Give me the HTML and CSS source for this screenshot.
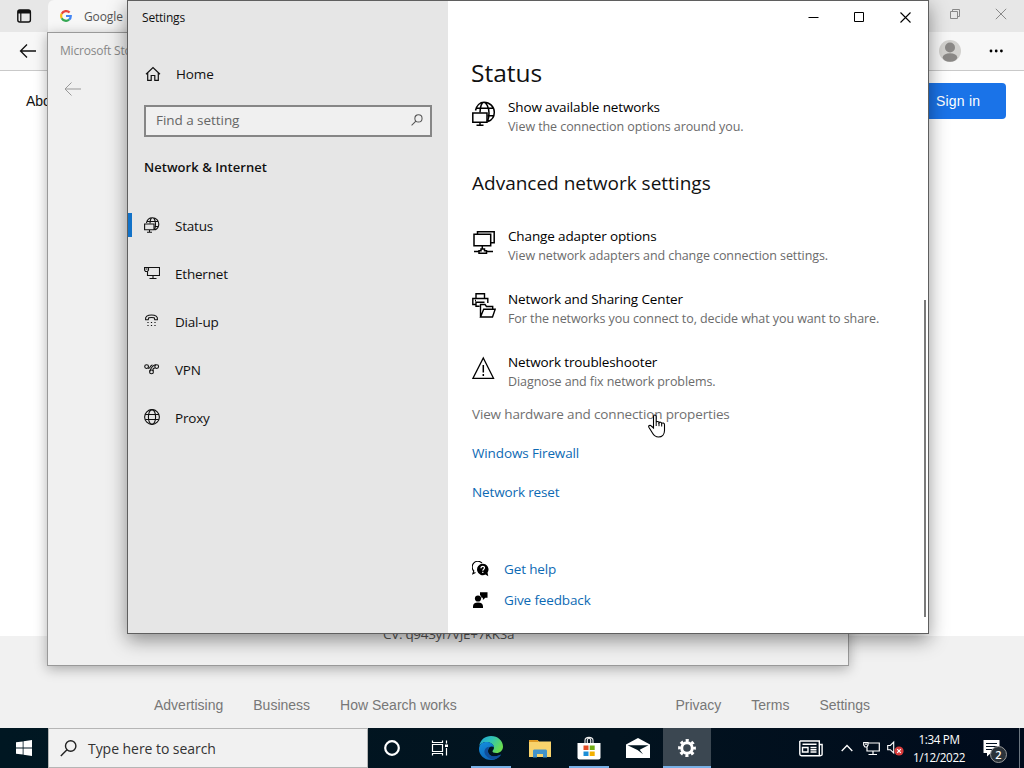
FILE: index.html
```html
<!DOCTYPE html>
<html lang="en">
<head>
    <meta charset="UTF-8">
    <meta name="viewport" content="width=device-width, initial-scale=1.0">
    <title>Settings</title>
    <link rel="stylesheet" href="styles.css">
</head>
<body>
    <div class="desktop">
        <!-- Edge -->
        <div class="browser">
            <div class="tab-strip">
                <svg class="tab-menu" width="16" height="16" viewBox="0 0 16 16"><rect x="1.8" y="2" width="12.6" height="12" rx="2" fill="none" stroke="#111" stroke-width="1.4"/><path d="M2 2h12v3.5H2z" fill="#111"/><path d="M4.8 5v8.5" stroke="#111" stroke-width="1.2"/></svg>
                <div class="tab">
                    <svg width="12" height="12" viewBox="0 0 12 12" fill="none" stroke-width="2.2"><path d="M9.6 2.6A4.9 4.9 0 0 0 1.7 3.8" stroke="#e8453c"/><path d="M1.7 3.8a4.9 4.9 0 0 0 0 4.4" stroke="#f8bb15"/><path d="M1.7 8.2a4.9 4.9 0 0 0 7.4 1.5" stroke="#34a853"/><path d="M9.1 9.7A4.8 4.8 0 0 0 10.8 6H6" stroke="#4285f4"/></svg>
                    <span>Google</span>
                </div>
                <div class="browser-caption">
                    <svg width="12" height="12" viewBox="0 0 12 12" fill="none" stroke="#888"><path d="M1.5 3.5h7v7h-7zM3.5 3.5v-2h7v7h-2"/></svg>
                    <svg width="12" height="12" viewBox="0 0 12 12" fill="none" stroke="#888"><path d="M.8.8l10.4 10.4M11.2.8L.8 11.2"/></svg>
                </div>
            </div>
            <div class="toolbar">
                <svg class="back" width="18" height="16" viewBox="0 0 18 16" fill="none" stroke="#111" stroke-width="1.3"><path d="M17 8H1.5M8 1.5L1.5 8 8 14.5"/></svg>
                <svg class="avatar" width="22" height="22" viewBox="0 0 22 22"><circle cx="11" cy="11" r="11" fill="#d2d1ce"/><circle cx="11" cy="7.5" r="5" fill="#8a8886"/><ellipse cx="11" cy="17.5" rx="7.3" ry="4.2" fill="#8a8886"/></svg>
                <svg class="more" width="14" height="4" viewBox="0 0 14 4"><circle cx="2" cy="2" r="1.4"/><circle cx="7.2" cy="2" r="1.4"/><circle cx="12.4" cy="2" r="1.4"/></svg>
            </div>
            <div class="page">
                <div class="page-header">
                    <span>About</span>
                    <span class="sign-in">Sign in</span>
                </div>
                <div class="page-footer">
                    <span>Advertising</span>
                    <span>Business</span>
                    <span>How Search works</span>
                    <span class="footer-right">Privacy</span>
                    <span>Terms</span>
                    <span>Settings</span>
                </div>
            </div>
        </div>

        <!-- Microsoft Store -->
        <div class="store">
            <div class="store-title">Microsoft Store</div>
            <svg class="store-back" width="17" height="14" viewBox="0 0 17 14" fill="none" stroke="#999"><path d="M17 7H1M7.5.5L1 7l6.500 6.500"/></svg>
            <div class="store-cv">CV: q943yr/VJE+7kKSa</div>
        </div>

        <!-- Settings -->
        <div class="settings">
            <div class="sidebar">
                <div class="window-title">Settings</div>
                <div class="home">
                    <svg width="16" height="16" viewBox="0 0 16 16" fill="none" stroke="#111" stroke-width="1.2"><path d="M1 8.200L8 1.500l7 6.700M2.700 6.800v7.600h3.500V9.500h3.600v4.900h3.500V6.800"/></svg>
                    <span>Home</span>
                </div>
                <div class="search-box">
                    <span>Find a setting</span>
                    <svg width="12" height="12" viewBox="0 0 14 14" fill="none" stroke="#555" stroke-width="1.200"><circle cx="8.700" cy="5.200" r="4.200"/><path d="M5.700 8.200L.7 13.200"/></svg>
                </div>
                <div class="section">Network &amp; Internet</div>
                <div class="nav">
                    <div class="nav-item active">
                        <svg width="16" height="16" viewBox="0 0 16 16" fill="none" stroke="#111" stroke-width="1.100"><path d="M2.500 6C3 2.800 5.500.8 8.500.8c3.600 0 6.300 2.800 6.300 6.300 0 2.800-1.600 5-4 5.900M6 6.500C6 3 7 .8 8.500.8s3 2.700 3 6.200-.7 5-1.200 5.800M3 4.500h11.500M10.500 9.500h4"/><path d="M.6 7h9.400v5.700H.6zM5.500 12.700v2.500M3 15.200h5"/></svg>
                        <span>Status</span>
                    </div>
                    <div class="nav-item">
                        <svg width="16" height="16" viewBox="0 0 16 16" fill="none" stroke="#111" stroke-width="1.100"><path d="M5 2.500h10.500v8H3.500V7M9 10.500v3M5.500 13.500h7M.5 2.500H4.500V5L3.500 6.500h-2L.5 5zM1.500 4h2"/></svg>
                        <span>Ethernet</span>
                    </div>
                    <div class="nav-item">
                        <svg width="16" height="16" viewBox="0 0 16 16" fill="none" stroke="#111" stroke-width="1.100"><path d="M1.600 6.700C1 3.500 3.500 2 7.500 2s6.500 1.500 5.900 4.700h-2.600l-.6-1.900C8.500 4.400 6.500 4.400 4.800 4.800L4.200 6.700z"/><path d="M3.400 9.500h8.500M3.400 12.500h8.500" stroke-dasharray="1.200 2.300" stroke-width="1.200"/></svg>
                        <span>Dial-up</span>
                    </div>
                    <div class="nav-item">
                        <svg width="16" height="16" viewBox="0 0 16 16" fill="none" stroke="#111" stroke-width="1.100"><circle cx="2.600" cy="5.600" r="1.900"/><circle cx="12.700" cy="5.600" r="1.900"/><circle cx="7.500" cy="10.900" r="1.900"/><path d="M4 7C6 8.500 6 3.800 8.500 4M5.600 10.500C6.500 8 8.500 4 12 3.700M9.200 10C8.500 8 9.500 6.800 11.200 7"/></svg>
                        <span>VPN</span>
                    </div>
                    <div class="nav-item">
                        <svg width="16" height="16" viewBox="0 0 16 16" fill="none" stroke="#111" stroke-width="1.100"><circle cx="8" cy="8" r="7.400"/><ellipse cx="8" cy="8" rx="3.600" ry="7.400"/><path d="M1.200 5.500h13.600M1.200 10.500h13.600"/></svg>
                        <span>Proxy</span>
                    </div>
                </div>
            </div>

            <div class="main">
                <div class="caption">
                    <svg width="11" height="11" viewBox="0 0 11 11" fill="none" stroke="#000"><path d="M.5 5.500h10"/></svg>
                    <svg width="11" height="11" viewBox="0 0 11 11" fill="none" stroke="#000"><path d="M.5.500h9v9H.5z"/></svg>
                    <svg width="11" height="11" viewBox="0 0 11 11" fill="none" stroke="#000" stroke-width="1.100"><path d="M.5.5l10 10M10.500.5l-10 10"/></svg>
                </div>
                <h1>Status</h1>
                <div class="option">
                    <svg width="24" height="25" viewBox="0 0 24 25" fill="none" stroke="#000" stroke-width="1.500"><path d="M3.500 9.500C4.500 4.500 8 1.200 12 1.200c5.700 0 10.300 4.500 10.300 10 0 4.400-2.800 8-6.300 9.300M8 11.500C8 5 10 1.200 12 1.200S17 6 17 12 16 19 15 20.500M4.500 7.200h17M15.500 14.700h6.500"/><path d="M.8 12h14.200v9.200H.8zM8 21.200v3M4.500 24.200h7"/></svg>
                    <div class="option-text">
                        <div class="option-title">Show available networks</div>
                        <div class="option-desc">View the connection options around you.</div>
                    </div>
                </div>
                <h2>Advanced network settings</h2>
                <div class="options">
                    <div class="option">
                        <svg width="24" height="25" viewBox="0 0 24 25" fill="none" stroke="#000" stroke-width="1.500"><path d="M5.500 4V1.700h16.700v11h-3M2 4.200h16.700v11.500H2zM10.300 15.700V19M2 21.500h5M14 21.500h7M7 23.300v-2.500h2V19h3.500v1.800h2v2.500z"/></svg>
                        <div class="option-text">
                            <div class="option-title">Change adapter options</div>
                            <div class="option-desc">View network adapters and change connection settings.</div>
                        </div>
                    </div>
                    <div class="option">
                        <svg width="24" height="25" viewBox="0 0 24 25" fill="none" stroke="#000" stroke-width="1.400"><path d="M4 5.500V.8h8.500v4.700M4 11.500H.8v-6h15v4.500M4 13V9.200h8.500M4 9.200v4h3.500M3 7.500h1M8.500 24V11.500h4.500l1.500 2h6.200v2.700M8.500 24l3.200-7.800h11.500L20.500 24z"/></svg>
                        <div class="option-text">
                            <div class="option-title">Network and Sharing Center</div>
                            <div class="option-desc">For the networks you connect to, decide what you want to share.</div>
                        </div>
                    </div>
                    <div class="option">
                        <svg width="24" height="25" viewBox="0 0 24 25" fill="none" stroke="#000" stroke-width="1.300"><path d="M11.300 2L21.500 22.300H1z"/><path d="M11.300 9v7.500M11.300 18v2" stroke-width="1.500"/></svg>
                        <div class="option-text">
                            <div class="option-title">Network troubleshooter</div>
                            <div class="option-desc">Diagnose and fix network problems.</div>
                        </div>
                    </div>
                </div>
                <div class="links">
                    <span class="link hovered">View hardware and connection properties</span>
                    <span class="link">Windows Firewall</span>
                    <span class="link">Network reset</span>
                </div>
                <div class="support">
                    <div class="support-item">
                        <svg width="17" height="17" viewBox="0 0 17 17"><path d="M3.500 11.500L.8 12.800l1-2.800A5.500 5.500 0 1 1 10 2" fill="none" stroke="#000" stroke-width="1.100"/><path d="M10.700 2.800a5.700 5.700 0 1 0 2.800 10.700l2.800 1.800-.8-3.600a5.700 5.700 0 0 0-4.800-8.900z"/><path d="M9 7.200c0-2.500 3.600-2.300 3.500-.2-.1 1.300-1.700 1.200-1.700 2.800M10.800 10.800v1.200" fill="none" stroke="#fff" stroke-width="1.200"/></svg>
                        <span class="link">Get help</span>
                    </div>
                    <div class="support-item">
                        <svg width="17" height="17" viewBox="0 0 17 17"><circle cx="6" cy="6.500" r="3.100"/><path d="M1 16v-1.500c0-2.500 1.700-4 5-4s5 1.500 5 4V16zM8 .3h7.500v5.400h-2.200L10.900 8V5.700H9.500A4 4 0 0 0 8 3z"/></svg>
                        <span class="link">Give feedback</span>
                    </div>
                </div>
                <div class="scrollbar"></div>
            </div>
        </div>

        <svg class="cursor" width="18" height="24" viewBox="0 0 18 24"><path d="M5.500 14V2.500c0-2 2.700-2 2.700 0v6c.5-1.500 2.700-1.300 2.800.3.600-1 2.500-.8 2.700.7.700-.9 2.800-.7 2.800 1.200v5.800c0 4-2.500 6.500-6 6.500-3.200 0-4.800-1.600-6.200-4.200L1 13.500c-1-1.800 1-2.900 2.300-1.500z" fill="#fff" stroke="#000" stroke-width="1.100"/><path d="M8.200 8.500V12M11 9v3.200M13.700 9.800v2.700" stroke="#000"/></svg>

        <div class="taskbar">
            <div class="start">
                <svg width="16" height="16" viewBox="0 0 16 16" fill="#fff"><path d="M0 2.300l6.700-.9v6.200H0zM7.500 1.200L16 0v7.600H7.500zM0 8.400h6.700v6.200L0 13.700zM7.500 8.400H16V16l-8.500-1.200z"/></svg>
            </div>
            <div class="task-search">
                <svg width="17" height="17" viewBox="0 0 17 17" fill="none" stroke="#222" stroke-width="1.400"><circle cx="10.700" cy="6" r="5.200"/><path d="M7 9.700L.8 16"/></svg>
                <span>Type here to search</span>
            </div>
            <div class="task">
                <svg width="16" height="16" viewBox="0 0 16 16"><circle cx="8" cy="8" r="6.800" fill="none" stroke="#fff" stroke-width="2.200"/></svg>
            </div>
            <div class="task">
                <svg width="18" height="16" viewBox="0 0 18 16" fill="none" stroke="#fff" stroke-width="1.200"><path d="M1.500 4.500h10v7h-10zM1.500.5v2h10v-2M1.500 15.500v-2h10v2M15.500.5v3M15.500 8v7.500"/><path d="M14 4.500h3V7h-3z" fill="#fff" stroke="none"/></svg>
            </div>
            <div class="apps">
                <div class="app open">
                    <svg width="26" height="26" viewBox="0 0 26 26">
                        <defs>
                            <linearGradient id="edgeTop" x1="0" y1="0" x2="1" y2=".5"><stop offset="0" stop-color="#1fa0d8"/><stop offset=".5" stop-color="#30c3b5"/><stop offset="1" stop-color="#68dc50"/></linearGradient>
                            <linearGradient id="edgeLeft" x1="0" y1="0" x2=".6" y2="1"><stop offset="0" stop-color="#1490df"/><stop offset="1" stop-color="#0c62b5"/></linearGradient>
                        </defs>
                        <path d="M1.200 11C2.500 4.500 7 1 13 1c7 0 12 5 12 10.500 0 4-3 6.500-6.500 6.500-3 0-4.300-1-4-2 .3-.8 1.500-1.500 1.500-3.500C16 9.500 12.500 7 8.500 7c-3.500 0-6 1.700-7.300 4z" fill="url(#edgeTop)"/>
                        <path d="M1 14c0-4.500 3.500-7 7.500-7 4.500 0 7.500 2.700 7.500 5.500-1.500-2-6-1-6 3.500 0 5 5.500 7.500 13 3.500-2 3.500-6 5.500-10 5.500C6 25 1 20 1 14z" fill="url(#edgeLeft)"/>
                        <path d="M11.500 11.700C6.500 12 5 17 8 20.500c2 2.500 5 4 8 4 3-.7 5.500-2.500 7-5C16 23 10 21 10 16c0-2 .5-3.300 1.500-4.300z" fill="#104f9c"/>
                    </svg>
                </div>
                <div class="app">
                    <svg width="22" height="19" viewBox="0 0 22 19"><path d="M0 1h8.500l1.500 1.500H22V18H0z" fill="#f8d36c"/><path d="M0 1h8.500l1.200 2H0z" fill="#df9b25"/><path d="M4 18.500V12c0-1 .7-1.500 1.500-1.500h11c.8 0 1.500.5 1.500 1.500v6.500h-4V15H8v3.500z" fill="#4293ca"/></svg>
                </div>
                <div class="app open">
                    <svg width="24" height="24" viewBox="0 0 24 24"><path d="M8 7V4.500C8 .3 16 .3 16 4.500V7M10.300 7V4c0-2 3.400-2 3.400 0v3" fill="none" stroke="#eee" stroke-width="1.100"/><path d="M.5 7h23v14.500a2 2 0 0 1-2 2h-19a2 2 0 0 1-2-2z" fill="#fff"/><path d="M6.500 9.500h5V14h-5z" fill="#e34c25"/><path d="M12.700 9.500h5V14h-5z" fill="#72ad14"/><path d="M6.500 15.500h5V20h-5z" fill="#1c8ed7"/><path d="M12.700 15.500h5V20h-5z" fill="#f3b000"/></svg>
                </div>
                <div class="app">
                    <svg width="24" height="20" viewBox="0 0 24 20"><path d="M0 6.500L12 0l12 6.500V20H0z" fill="#fff"/><path d="M1.500 7.200h21l-8.800 4.500 3.300 4.500-5.500-4.200z" fill="#021620"/></svg>
                </div>
                <div class="app open current">
                    <svg width="18" height="18" viewBox="0 0 18 18" fill="none" stroke="#fff"><circle cx="9" cy="9" r="5.300" stroke-width="3"/><circle cx="9" cy="9" r="7.500" stroke-width="2.800" stroke-dasharray="3.100 2.790" stroke-dashoffset="1.550"/></svg>
                </div>
            </div>
            <div class="tray">
                <svg class="news" width="24" height="17" viewBox="0 0 24 17" fill="none" stroke="#fff" stroke-width="1.400"><path d="M.8 1h19.500v13.500c0 1.500 2.800 1.500 2.800 0V4.500h-2.800M.8 1v13c0 1 .7 1.700 1.700 1.700h19M3.500 4.200h14M3.500 7.500H9V12H3.500zM11.500 7.500h6M11.500 9.800h6M11.500 12h6"/></svg>
                <svg class="chevron" width="12" height="8" viewBox="0 0 12 8" fill="none" stroke="#fff" stroke-width="1.300"><path d="M.7 7L6 1.500 11.300 7"/></svg>
                <svg class="lan" width="17" height="15" viewBox="0 0 17 15" fill="none" stroke="#fff" stroke-width="1.200"><path d="M5.500 2h10.800v8H4V6.500M10 10v3.500M5.500 13.500H14M.7 1.500H5V4L4 6H2L.7 4zM2 3.200h2"/></svg>
                <svg class="sound" width="17" height="16" viewBox="0 0 17 16"><path d="M.7 5.500h2.600L6.700 2v11L3.300 9.700H.7z" fill="none" stroke="#fff" stroke-width="1.100"/><circle cx="12" cy="11" r="4.600" fill="#d83b3b"/><path d="M10.200 9.200l3.600 3.600M13.800 9.200l-3.600 3.600" stroke="#fff" stroke-width="1.200"/></svg>
                <div class="clock">
                    <div>1:34 PM</div>
                    <div>1/12/2022</div>
                </div>
                <div class="notify">
                    <svg width="17" height="17" viewBox="0 0 17 17"><path d="M.5 0h16v13H8l-4 3.500V13H.5z" fill="#fff"/><path d="M3 3.500h11M3 6.500h11M3 9.500h7" stroke="#001020" stroke-width="1.200"/></svg>
                    <span class="badge">2</span>
                </div>
            </div>
        </div>
    </div>
</body>
</html>
```

FILE: styles.css
```css
* {
    box-sizing: border-box;
}

body {
    margin: 0;
    overflow: hidden;
    font-family: "Open Sans", "Noto Sans", sans-serif;
    font-size: 13.5px;
    color: #111;
}

svg {
    display: block;
    flex: none;
}

span, div, h1, h2 {
    white-space: nowrap;
}

.desktop {
    position: relative;
    width: 1024px;
    height: 768px;
    display: flex;
    flex-direction: column;
    overflow: hidden;
}

/* browser */
.browser {
    flex: 1;
    display: flex;
    flex-direction: column;
    background: #fff;
}

.tab-strip {
    display: flex;
    align-items: center;
    height: 32px;
    padding-left: 16px;
    background: #e7e7e7;
}

.tab {
    display: flex;
    align-items: center;
    gap: 12px;
    width: 240px;
    height: 32px;
    margin-left: 16px;
    padding-left: 12px;
    border-radius: 6px 6px 0 0;
    background: #f7f7f7;
    color: #555;
    font-size: 12px;
    letter-spacing: -0.1px;
}

.browser-caption {
    display: flex;
    gap: 34px;
    margin-left: auto;
    padding: 0 17px 4px 0;
}

.toolbar {
    display: flex;
    align-items: center;
    height: 39px;
    padding: 0 21px 0 19px;
    background: #f7f7f7;
    border-bottom: 1px solid #c9c9c9;
}

.avatar {
    margin-left: auto;
}

.more {
    margin-left: 28px;
}

.page {
    flex: 1;
    display: flex;
    flex-direction: column;
    font-family: "Liberation Sans", Arial, sans-serif;
    font-size: 14px;
}

.page-header {
    display: flex;
    justify-content: space-between;
    align-items: center;
    padding: 12px 18px 0 26px;
}

.sign-in {
    width: 96px;
    padding-left: 26px;
    line-height: 36px;
    background: #1a73e8;
    border-radius: 4px;
    color: #fff;
    letter-spacing: 0.2px;
}

.page-footer {
    display: flex;
    align-items: flex-end;
    gap: 30px;
    height: 92px;
    margin-top: auto;
    padding: 0 154px 14px;
    background: #f1f1f1;
    color: #777;
    line-height: 18px;
}

.footer-right {
    margin-left: auto;
}

/* store window */
.store {
    position: absolute;
    left: 47px;
    top: 32px;
    width: 802px;
    height: 634px;
    display: flex;
    flex-direction: column;
    background: #f0f0f0;
    border: 1px solid #999;
    box-shadow: 0 3px 12px rgba(0, 0, 0, 0.3);
}

.store-title {
    padding: 9px 0 0 12px;
    color: #888;
    font-size: 12px;
    line-height: 18px;
    letter-spacing: -0.2px;
}

.store-back {
    margin: 22px 0 0 16px;
}

.store-cv {
    margin: auto 0 22px 335px;
    color: #555;
    line-height: 18px;
    letter-spacing: -0.3px;
}

/* settings window */
.settings {
    position: absolute;
    left: 127px;
    top: 0;
    width: 802px;
    height: 634px;
    display: flex;
    border: 1px solid #5f5f5f;
    background: #fff;
    box-shadow: 0 6px 18px rgba(0, 0, 0, 0.42);
}

.sidebar {
    width: 320px;
    background: #e6e6e6;
}

.window-title {
    padding: 8px 0 0 14px;
    font-size: 12px;
    line-height: 18px;
    letter-spacing: -0.2px;
}

.home {
    display: flex;
    align-items: center;
    gap: 15px;
    height: 24px;
    margin-top: 35px;
    padding-left: 17px;
    letter-spacing: -0.1px;
}

.search-box {
    display: flex;
    align-items: center;
    justify-content: space-between;
    height: 32px;
    margin: 19px 16px 0;
    padding: 0 7px 2px 10px;
    border: 2px solid #868686;
    background: #f0f0f0;
    color: #666;
    letter-spacing: -0.05px;
}

.section {
    margin: 20px 0 0 16px;
    line-height: 20px;
    font-size: 13px;
    font-weight: 600;
    letter-spacing: 0.05px;
}

.nav {
    margin-top: 25px;
}

.nav-item {
    display: flex;
    align-items: center;
    gap: 15px;
    height: 48px;
    padding-left: 16px;
    font-size: 13.5px;
    letter-spacing: -0.2px;
}

.nav-item svg {
    margin-bottom: 2px;
}

.nav-item.active {
    background: linear-gradient(#1272c8, #1272c8) 0 11px / 4px 24px no-repeat;
}

.main {
    position: relative;
    flex: 1;
    display: flex;
    flex-direction: column;
    padding-left: 23px;
}

.caption {
    display: flex;
    justify-content: flex-end;
    gap: 35px;
    padding: 11px 17px 0 0;
}

h1 {
    margin: 30px 0 0;
    font-size: 24.5px;
    font-weight: 400;
    line-height: 40px;
}

.option {
    display: flex;
    gap: 12px;
    padding-left: 1px;
}

.option svg {
    margin-top: 3px;
}

h1 + .option {
    margin-top: 5px;
}

.option-title,
.option-desc {
    line-height: 19px;
}

.option-title {
    color: #000;
    letter-spacing: -0.13px;
}

.option-desc {
    color: #6b6b6b;
    font-size: 12.5px;
    letter-spacing: -0.08px;
}

h2 {
    margin: 32px 0 0 1px;
    font-size: 19px;
    font-weight: 400;
    line-height: 30px;
}

.options {
    display: flex;
    flex-direction: column;
    gap: 25px;
    margin-top: 29px;
}

.links {
    display: flex;
    flex-direction: column;
    align-items: flex-start;
    gap: 20px;
    margin: 14px 0 0 1px;
}

.link {
    color: #0d6ab4;
    line-height: 19px;
    letter-spacing: -0.13px;
}

.link.hovered {
    color: #707070;
    letter-spacing: -0.15px;
}

.support {
    display: flex;
    flex-direction: column;
    gap: 11px;
    margin: 57px 0 0 1px;
}

.support-item {
    display: flex;
    align-items: center;
    gap: 15px;
    height: 20px;
}

.scrollbar {
    position: absolute;
    right: 2px;
    top: 299px;
    width: 2px;
    height: 317px;
    background: #7a7a7a;
}

.cursor {
    position: absolute;
    left: 648px;
    top: 414px;
}

/* taskbar */
.taskbar {
    display: flex;
    height: 40px;
    background: linear-gradient(90deg, #001722, #02131f 60%, #000b1c);
    color: #fff;
}

.start,
.task,
.app {
    display: flex;
    align-items: center;
    justify-content: center;
    width: 48px;
}

.task-search {
    display: flex;
    align-items: center;
    gap: 11px;
    width: 320px;
    padding-left: 11px;
    border: 1px solid #b5b5b5;
    background: #f1f1f1;
    color: #333;
    font-size: 14px;
    letter-spacing: -0.05px;
}

.apps {
    display: flex;
    gap: 1px;
    margin-left: 3px;
}

.open {
    background: linear-gradient(#78b0e6, #78b0e6) 4px 38px / 40px 2px no-repeat;
}

.current {
    background: linear-gradient(#78b0e6, #78b0e6) 0 38px / 48px 2px no-repeat, #3b4751;
}

.tray {
    flex: 1;
    display: flex;
    align-items: center;
    padding-left: 88px;
    background: linear-gradient(#6c7680, #6c7680) 308px 0 / 1px 40px no-repeat;
}

.chevron {
    margin-left: 18px;
}

.lan {
    margin-left: 10px;
}

.sound {
    margin-left: 7px;
}

.clock {
    width: 60px;
    margin-left: 5px;
    font-size: 11.7px;
    line-height: 18px;
    text-align: center;
    letter-spacing: -0.35px;
}

.notify {
    position: relative;
    margin-left: 14px;
}

.badge {
    position: absolute;
    left: 7px;
    top: 6px;
    width: 17px;
    height: 17px;
    border: 1px solid #999;
    border-radius: 50%;
    background: #2b333a;
    font-size: 11px;
    font-weight: 600;
    line-height: 15px;
    text-align: center;
}
```
